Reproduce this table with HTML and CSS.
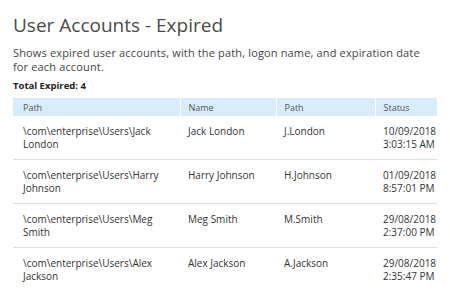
FILE: index.html
```html
<!DOCTYPE html>
<html>
<head>
<meta charset="utf-8">
<link rel="stylesheet" href="styles.css">
</head>
<body>
<div class="page">
  <h1 class="title">User Accounts - Expired</h1>
  <p class="desc">Shows expired user accounts, with the path, logon name, and expiration date for each account.</p>
  <div class="total">Total Expired: 4</div>
  <table class="grid">
    <colgroup>
      <col class="c1"><col class="c2"><col class="c3"><col class="c4">
    </colgroup>
    <thead>
      <tr><th>Path</th><th>Name</th><th>Path</th><th>Status</th></tr>
    </thead>
    <tbody>
      <tr><td>\com\enterprise\Users\Jack London</td><td>Jack London</td><td>J.London</td><td>10/09/2018<br>3:03:15 AM</td></tr>
      <tr><td>\com\enterprise\Users\Harry Johnson</td><td>Harry Johnson</td><td>H.Johnson</td><td>01/09/2018<br>8:57:01 PM</td></tr>
      <tr><td>\com\enterprise\Users\Meg Smith</td><td>Meg Smith</td><td>M.Smith</td><td>29/08/2018<br>2:37:00 PM</td></tr>
      <tr><td>\com\enterprise\Users\Alex Jackson</td><td>Alex Jackson</td><td>A.Jackson</td><td>29/08/2018<br>2:35:47 PM</td></tr>
    </tbody>
  </table>
</div>
</body>
</html>
```
FILE: styles.css
```css
html, body {
  margin: 0;
  padding: 0;
  background: #ffffff;
}
body {
  font-family: "Open Sans", "Liberation Sans", sans-serif;
  color: #333333;
}
.page {
  padding: 12px 13px 0 13px;
}
.title {
  margin: 0;
  font-size: 19px;
  line-height: 26px;
  font-weight: 400;
  color: #4a4a4a;
}
.desc {
  margin: 8px 0 0 0;
  max-width: 412px;
  font-size: 11px;
  letter-spacing: 0.15px;
  line-height: 13.5px;
  color: #444444;
}
.total {
  margin-top: 6px;
  font-size: 9.5px;
  line-height: 13px;
  font-weight: 700;
  color: #222222;
}
.grid {
  margin-top: 6px;
  width: 424px;
  border-collapse: collapse;
  table-layout: fixed;
  font-size: 10px;
  line-height: 13px;
}
.c1 { width: 167px; }
.c2 { width: 96px; }
.c3 { width: 99px; }
.c4 { width: 62px; }
.grid th {
  background: #d9ecf9;
  color: #555555;
  font-size: 9px;
  font-weight: 400;
  text-align: left;
  padding: 3px 8px 2px 8px;
  border-left: 1px solid #ffffff;
}
.grid th:first-child {
  border-left: none;
  padding-left: 10px;
}
.grid td {
  vertical-align: top;
  padding: 9px 0 8px 8px;
  color: #333333;
  border-bottom: 1px solid #dddddd;
}
.grid td:first-child {
  padding-left: 10px;
}
.grid tbody tr:last-child td {
  border-bottom: none;
}
```
